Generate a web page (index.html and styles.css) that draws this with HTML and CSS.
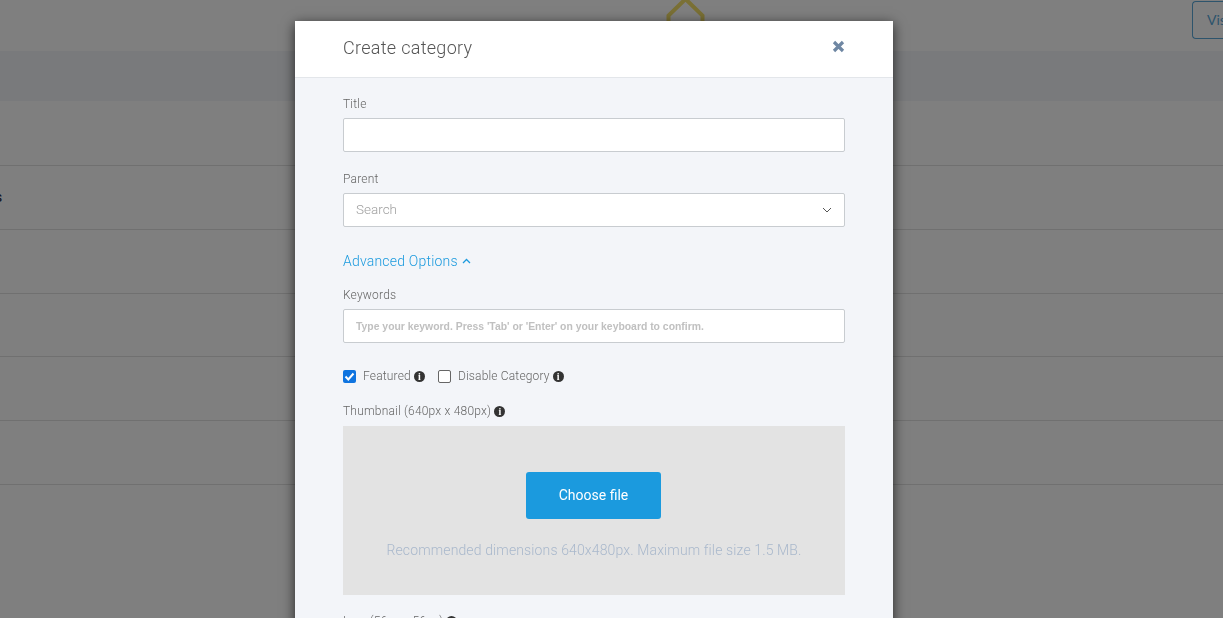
FILE: index.html
```html
<!DOCTYPE html>
<html lang="en">

<head>
  <meta charset="UTF-8">
  <meta name="viewport" content="width=device-width, initial-scale=1.0">
  <link rel="stylesheet" href="styles.css">
  <title>Create category</title>
</head>

<body>
  <!-- page behind the dialog -->
  <div class="page">
    <div class="topbar">
      <svg class="logo" width="44" height="24" viewBox="0 0 44 24">
        <path d="M4.5 24 L4.5 18.5 L21.5 2 L38.5 18.5 L38.5 24" fill="none" stroke="#f5e06a" stroke-width="4" />
      </svg>
      <a class="visit-button">Visit</a>
    </div>
    <div class="table-head"></div>
    <div class="row first"></div>
    <div class="row"><span class="row-name">Categories</span></div>
    <div class="row"></div>
    <div class="row"></div>
    <div class="row"></div>
    <div class="row"></div>
  </div>

  <div class="backdrop"></div>

  <div class="modal">
    <div class="modal-header">
      <h2>Create category</h2>
      <svg class="close" width="13" height="13" viewBox="0 0 13 13">
        <path d="M2 2 L11 11 M11 2 L2 11" stroke="#6f87a3" stroke-width="3.2" />
      </svg>
    </div>
    <div class="modal-body">
      <div class="field">
        <label>Title</label>
        <div class="input"></div>
      </div>
      <div class="field">
        <label>Parent</label>
        <div class="input select">
          <span class="placeholder">Search</span>
          <svg width="10" height="6" viewBox="0 0 10 6">
            <path d="M1 1 L5 5 L9 1" fill="none" stroke="#555" stroke-width="1" />
          </svg>
        </div>
      </div>
      <a class="advanced">Advanced Options
        <svg width="9" height="6" viewBox="0 0 9 6">
          <path d="M1 5 L4.5 1.5 L8 5" fill="none" stroke="#1b9ade" stroke-width="1.3" />
        </svg>
      </a>
      <div class="field keywords">
        <label>Keywords</label>
        <div class="input">
          <span class="keyword-hint">Type your keyword. Press 'Tab' or 'Enter' on your keyboard to confirm.</span>
        </div>
      </div>
      <div class="checks">
        <span class="check">
          <span class="box checked">
            <svg width="13" height="13" viewBox="0 0 13 13">
              <path d="M2.5 6.5 L5.3 9.5 L10.5 3.5" fill="none" stroke="#fff" stroke-width="2" />
            </svg>
          </span>
          Featured
          <span class="info">i</span>
        </span>
        <span class="check">
          <span class="box"></span>
          Disable Category
          <span class="info">i</span>
        </span>
      </div>
      <div class="field upload-field">
        <label>Thumbnail (640px x 480px) <span class="info">i</span></label>
        <div class="upload">
          <button class="choose-button">Choose file</button>
          <p>Recommended dimensions 640x480px. Maximum file size 1.5 MB.</p>
        </div>
      </div>
      <div class="field">
        <label>Icon (56px x 56px) <span class="info">i</span></label>
      </div>
    </div>
  </div>
</body>

</html>
```

FILE: styles.css
```css
html,
body {
  height: 100%;
}

body {
  margin: 0;
  overflow: hidden;
  font-family: "Roboto", "Liberation Sans", sans-serif;
  background-color: #fff;
}

.page {
  display: flex;
  flex-direction: column;
}

.topbar {
  height: 51px;
  box-sizing: border-box;
  display: flex;
  justify-content: flex-end;
  padding-top: 1px;
  position: relative;
}

.logo {
  position: absolute;
  left: 664px;
  top: -3px;
}

.visit-button {
  width: 31px;
  height: 38px;
  box-sizing: border-box;
  border: 1px solid #5aa8d8;
  border-right: none;
  border-radius: 4px 0 0 4px;
  padding-left: 14px;
  font-family: "Lato", sans-serif;
  font-size: 14px;
  line-height: 36px;
  color: #5aa8d8;
  overflow: hidden;
  white-space: nowrap;
}

.table-head {
  height: 50px;
  background-color: #f2f5f9;
}

.row {
  height: 62.75px;
  flex: none;
  border-bottom: 1px solid #e0e0e0;
  display: flex;
  align-items: center;
  overflow: hidden;
}

.row.first {
  height: 64px;
}

.row-name {
  margin-left: -70px;
  font-size: 15px;
  color: #1a2440;
}

.backdrop {
  position: fixed;
  top: 0;
  left: 0;
  right: 0;
  bottom: 0;
  background-color: rgba(0, 0, 0, 0.5);
}

.modal {
  position: absolute;
  top: 21px;
  left: 295px;
  width: 598px;
  background-color: #f3f5f9;
  box-shadow: 0 3px 12px rgba(0, 0, 0, 0.7);
  color: #666;
}

.modal-header {
  height: 57px;
  box-sizing: border-box;
  background-color: #fff;
  border-bottom: 1px solid #e3e6ea;
  padding: 0 48px 4px;
  display: flex;
  align-items: center;
  justify-content: space-between;
}

.modal-header h2 {
  margin: 0;
  font-size: 18px;
  font-weight: 300;
  letter-spacing: 0.3px;
  color: #555;
}

.close {
  margin-top: -2px;
}

.modal-body {
  padding: 18px 48px 0;
}

.field {
  margin-bottom: 19px;
}

.upload-field {
  margin-bottom: 18px;
}

.field label {
  display: block;
  font-size: 12px;
  font-weight: 300;
  line-height: 16px;
  letter-spacing: 0.2px;
  margin-bottom: 6px;
  color: #666;
}

.input {
  height: 34px;
  box-sizing: border-box;
  background-color: #fff;
  border: 1px solid #c8ccd0;
  border-radius: 2px;
  padding: 0 12px;
  display: flex;
  align-items: center;
}

.select {
  justify-content: space-between;
  padding-right: 12px;
}

.placeholder {
  margin-top: -2px;
  font-size: 13.5px;
  font-weight: 300;
  color: #a0a0a0;
}

.keyword-hint {
  font-family: "Liberation Sans", sans-serif;
  font-size: 10.4px;
  font-weight: bold;
  color: #c0c0c0;
}

.advanced {
  display: block;
  margin-top: 26px;
  font-size: 14px;
  font-weight: 300;
  line-height: 16px;
  letter-spacing: 0.2px;
  color: #1b9ade;
}

.advanced svg {
  margin-left: 1px;
  vertical-align: 2px;
}

.keywords {
  margin-top: 18px;
  margin-bottom: 18px;
}

.checks {
  display: flex;
  gap: 13px;
  margin-top: 25px;
  margin-bottom: 19px;
  font-size: 12px;
  font-weight: 300;
  line-height: 16px;
  letter-spacing: 0.17px;
  color: #666;
}

.check {
  display: flex;
  align-items: center;
  gap: 3px;
}

.box {
  width: 13px;
  height: 13px;
  box-sizing: border-box;
  border: 1px solid #666;
  border-radius: 2px;
  background-color: #fff;
  margin-right: 4px;
  display: block;
}

.box.checked {
  background-color: #0f74e0;
  border: none;
}

.box svg {
  display: block;
}

.info {
  display: inline-block;
  width: 11px;
  height: 11px;
  border-radius: 50%;
  background-color: #333;
  color: #fff;
  font-family: "Liberation Serif", serif;
  font-size: 10px;
  font-weight: bold;
  letter-spacing: 0;
  line-height: 11px;
  text-align: center;
}

.upload {
  height: 169px;
  margin-top: 7px;
  background-color: #e3e3e3;
  display: flex;
  flex-direction: column;
  align-items: center;
  padding-top: 46px;
  box-sizing: border-box;
}

.choose-button {
  width: 135px;
  height: 47px;
  margin-right: 1px;
  padding-bottom: 3px;
  border: none;
  border-radius: 3px;
  background-color: #1b9ade;
  color: #fff;
  font-family: "Roboto", sans-serif;
  font-size: 14px;
}

.upload p {
  margin: 23px 0 0;
  font-size: 14px;
  font-weight: 300;
  line-height: 16px;
  letter-spacing: 0.13px;
  color: #a9b8cc;
}
```
